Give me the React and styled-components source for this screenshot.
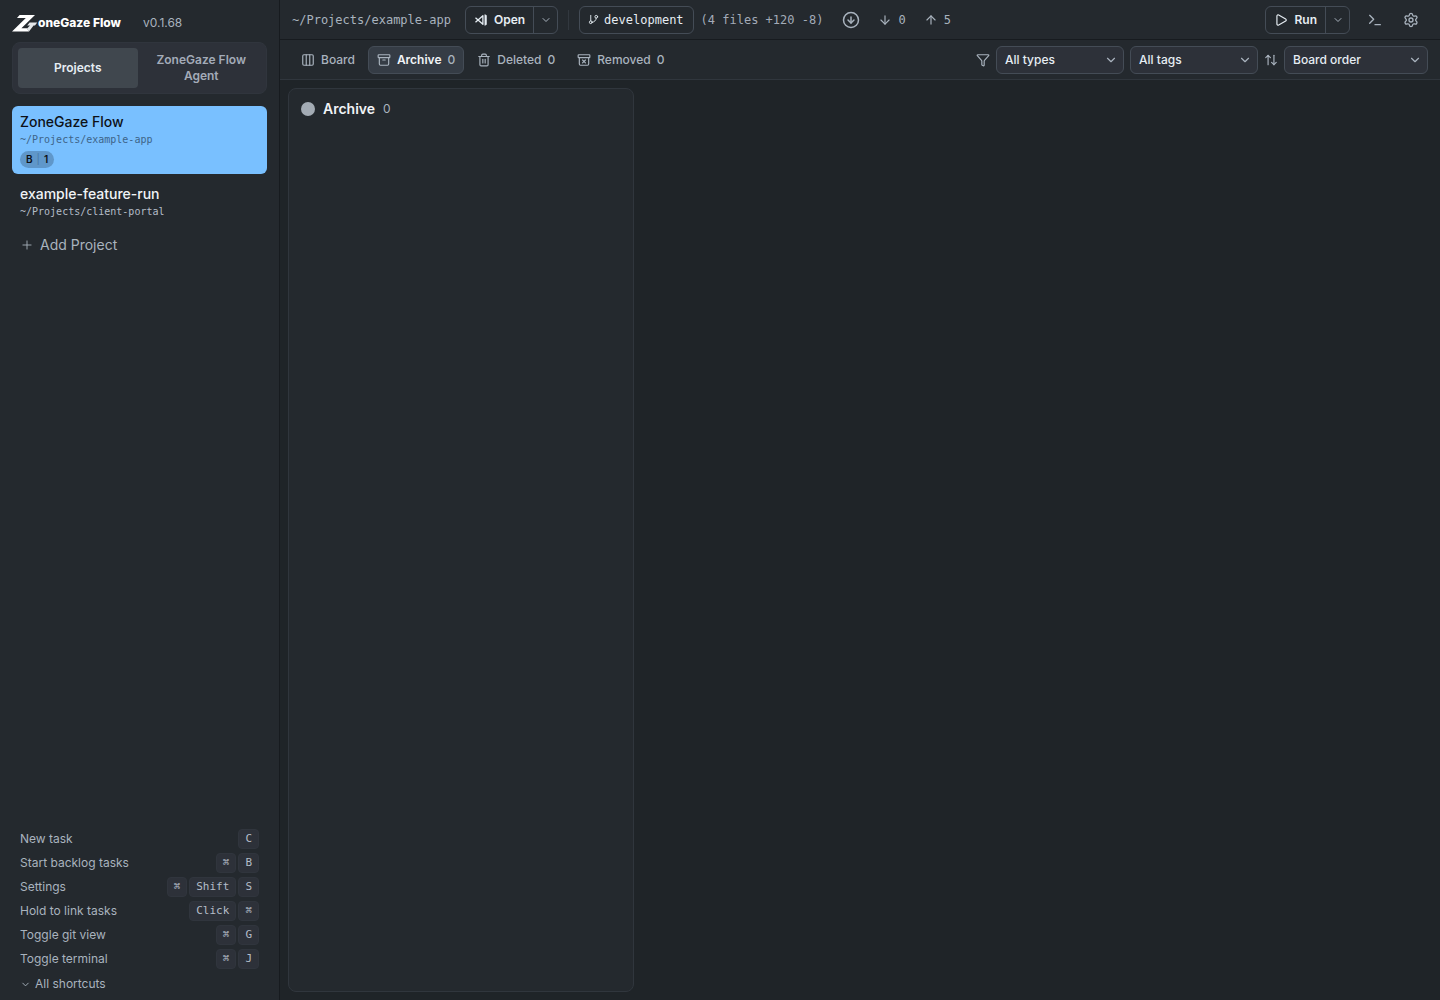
import React, { useState } from "react"
import styled, { createGlobalStyle } from "styled-components"
import {
  Archive,
  ArchiveX,
  ArrowDown,
  ArrowUp,
  ArrowUpDown,
  ChevronDown,
  CircleArrowDown,
  Columns3,
  Funnel,
  GitBranch,
  Play,
  Plus,
  Settings,
  Terminal,
  Trash2,
} from "lucide-react"

const sans = `Inter, "Liberation Sans", sans-serif`
const mono = `"DejaVu Sans Mono", "Liberation Mono", monospace`

const GlobalStyle = createGlobalStyle`
  * {
    box-sizing: border-box;
  }
  body {
    margin: 0;
    background: #1f2428;
    color: #e6edf3;
    font-family: ${sans};
    font-size: 12px;
    line-height: 16px;
    -webkit-font-smoothing: antialiased;
  }
  button, select {
    font: inherit;
    color: inherit;
    margin: 0;
    padding: 0;
    border: 0;
    background: none;
    cursor: pointer;
  }
  svg {
    display: block;
    flex-shrink: 0;
  }
`

const Layout = styled.div`
  display: flex;
  min-height: 100vh;
`

const Sidebar = styled.aside`
  display: flex;
  flex-direction: column;
  flex: 0 0 280px;
  padding: 0 12px 4px;
  background: #24292e;
  border-right: 1px solid #171b1f;
`

const Brand = styled.header`
  display: flex;
  align-items: center;
  height: 42px;
  padding-top: 4px;
`

const BrandName = styled.h1`
  margin: 0 22px 0 0;
  color: #ffffff;
  font-size: 12px;
  font-weight: 800;
`

const Version = styled.span`
  color: #a9b3be;
`

const Switcher = styled.div`
  display: grid;
  grid-template-columns: 1fr 1fr;
  gap: 4px;
  padding: 5px;
  background: #2d3139;
  border: 1px solid #30353d;
  border-radius: 8px;
`

const SwitcherButton = styled.button`
  min-height: 40px;
  padding: 4px 8px;
  border-radius: 4px;
  font-weight: 600;
  color: ${(p) => (p.$active ? "#e6edf3" : "#a3abb8")};
  background: ${(p) => (p.$active ? "#40474e" : "transparent")};
`

const Projects = styled.nav`
  display: flex;
  flex-direction: column;
  gap: 4px;
  margin-top: 12px;
`

const Project = styled.button`
  display: flex;
  flex-direction: column;
  align-items: flex-start;
  padding: 8px 8px 6px;
  border-radius: 6px;
  text-align: left;
  background: ${(p) => (p.$active ? "#79c0ff" : "transparent")};
  color: ${(p) => (p.$active ? "#0d1117" : "#f0f3f6")};
`

const ProjectName = styled.span`
  font-size: 14px;
  font-weight: 500;
`

const ProjectPath = styled.span`
  margin-top: 2px;
  font-family: ${mono};
  font-size: 10px;
  line-height: 15px;
  color: ${(p) => (p.$active ? "#3e6488" : "#b4bdc8")};
`

const Badge = styled.span`
  display: flex;
  gap: 4px;
  margin-top: 4px;
  padding: 0 6px;
  border-radius: 9px;
  background: #5f97ca;
  font-size: 10px;
  font-weight: 600;
  line-height: 17px;
`

const BadgeBar = styled.span`
  color: #4577a5;
  font-weight: 400;
`

const AddProject = styled.button`
  display: flex;
  align-items: center;
  gap: 6px;
  height: 32px;
  padding: 0 8px;
  font-size: 14px;
  color: #a9b3be;
`

const Shortcuts = styled.section`
  margin-top: auto;
  padding: 0 8px;
  color: #a9b3be;
`

const ShortcutRow = styled.div`
  display: flex;
  align-items: center;
  gap: 2px;
  height: 24px;
`

const ShortcutLabel = styled.span`
  flex: 1;
`

const Key = styled.kbd`
  height: 20px;
  padding: 0 6px;
  border: 1px solid #30353d;
  border-radius: 4px;
  background: #2d3139;
  color: #b4bdc8;
  font-family: ${mono};
  font-size: 11px;
  line-height: 18px;
`

const AllShortcuts = styled.button`
  display: flex;
  align-items: center;
  gap: 4px;
  height: 24px;
  margin-top: 1px;
`

const Main = styled.main`
  display: flex;
  flex-direction: column;
  flex: 1;
  min-width: 0;
`

const Bar = styled.div`
  display: flex;
  align-items: center;
  height: 40px;
  padding: 0 12px;
  background: #24292e;
  border-bottom: 1px solid ${(p) => p.$line};
`

const Path = styled.span`
  margin-right: 14px;
  font-family: ${mono};
  color: #a9b3be;
`

const SplitButton = styled.div`
  display: flex;
  height: 28px;
  border: 1px solid #444c56;
  border-radius: 6px;
`

const SplitMain = styled.button`
  display: flex;
  align-items: center;
  gap: 6px;
  padding: 0 8px;
  font-weight: 600;
`

const SplitToggle = styled.button`
  display: flex;
  align-items: center;
  justify-content: center;
  width: 24px;
  border-left: 1px solid #444c56;
  color: #a9b3be;
`

const Divider = styled.span`
  width: 1px;
  height: 20px;
  margin: 0 10px;
  background: #32383f;
`

const Branch = styled.button`
  display: flex;
  align-items: center;
  gap: 5px;
  height: 28px;
  margin-right: 7px;
  padding: 0 9px 0 8px;
  border: 1px solid #444c56;
  border-radius: 6px;
  font-family: ${mono};
`

const Changes = styled.span`
  margin-right: 19px;
  font-family: ${mono};
  color: #a3abb8;
`

const SyncButton = styled.button`
  display: flex;
  align-items: center;
  gap: 6px;
  margin-right: 18px;
  font-family: ${mono};
  color: #a9b3be;
`

const Tools = styled.div`
  display: flex;
  gap: 2px;
  margin-left: 8px;
`

const IconButton = styled.button`
  display: flex;
  padding: 6px 9px;
  color: #a9b3be;
`

const Spacer = styled.span`
  flex: 1;
`

const Tabs = styled.nav`
  display: flex;
  gap: 4px;
  flex: 1;
`

const Tab = styled.button`
  display: flex;
  align-items: center;
  gap: 6px;
  height: 28px;
  padding: 0 8px;
  border: 1px solid ${(p) => (p.$active ? "#444c56" : "transparent")};
  border-radius: 6px;
  background: ${(p) => (p.$active ? "#353c45" : "transparent")};
  color: #a9b3be;
  font-weight: 500;
`

const TabLabel = styled.span`
  color: ${(p) => (p.$active ? "#f0f3f6" : "inherit")};
  font-weight: ${(p) => (p.$active ? 600 : 500)};
`

const Filters = styled.div`
  display: flex;
  align-items: center;
  gap: 6px;
  color: #a9b3be;
`

const SelectBox = styled.div`
  display: grid;
  align-items: center;
  width: ${(p) => p.$width};

  > * {
    grid-area: 1 / 1;
  }
  svg {
    justify-self: end;
    margin-right: 6px;
    pointer-events: none;
  }
`

const Select = styled.select`
  appearance: none;
  width: 100%;
  height: 28px;
  padding: 0 24px 0 8px;
  border: 1px solid #444c56;
  border-radius: 6px;
  background: #2d3139;
  color: #e6edf3;
  font-weight: 500;
`

const Board = styled.div`
  display: flex;
  flex: 1;
  gap: 8px;
  padding: 8px;
`

const Column = styled.section`
  flex: 0 0 346px;
  border: 1px solid #30363d;
  border-radius: 8px;
  background: #24292e;
`

const ColumnHeader = styled.header`
  display: flex;
  align-items: center;
  gap: 8px;
  height: 40px;
  padding: 0 12px;
`

const Dot = styled.span`
  width: 14px;
  height: 14px;
  border-radius: 50%;
  background: #a3abb4;
`

const ColumnTitle = styled.h2`
  margin: 0;
  font-size: 14px;
  font-weight: 600;
  color: #f0f3f6;
`

const ColumnCount = styled.span`
  color: #a9b3be;
`

const Logo = () => (
  <svg width="26" height="18" viewBox="0 0 26 18" fill="#ffffff" aria-hidden="true">
    <path d="M7.6 1H23L9.4 14.200H14.800L17 17.500H0L13.800 4H5z" />
    <path d="M17.600 8.500H25.200L23 11.600H21.600L17 17.500L14.800 14.700L18 11.600H15.200z" fill="#e4e7ea" />
  </svg>
)

const VsCodeIcon = () => (
  <svg width="14" height="14" viewBox="0 0 14 14" fill="none" stroke="currentColor" strokeLinejoin="round" aria-hidden="true">
    <path d="M1.500 4.700 8.900 11.300V2.700L1.500 9.300" strokeWidth="1.300" />
    <path d="M10.800 1.600 12.500 2.500V11.500L10.800 12.400z" fill="currentColor" strokeWidth="0.500" />
  </svg>
)

const shortcuts = [
  { label: "New task", keys: ["C"] },
  { label: "Start backlog tasks", keys: ["⌘", "B"] },
  { label: "Settings", keys: ["⌘", "Shift", "S"] },
  { label: "Hold to link tasks", keys: ["Click", "⌘"] },
  { label: "Toggle git view", keys: ["⌘", "G"] },
  { label: "Toggle terminal", keys: ["⌘", "J"] },
]

const projects = [
  { name: "ZoneGaze Flow", path: "~/Projects/example-app", backlog: 1 },
  { name: "example-feature-run", path: "~/Projects/client-portal" },
]

const tabs = [
  { label: "Board", icon: Columns3 },
  { label: "Archive", icon: Archive, count: 0 },
  { label: "Deleted", icon: Trash2, count: 0 },
  { label: "Removed", icon: ArchiveX, count: 0 },
]

const Dropdown = ({ label, width, children }) => (
  <SelectBox $width={width}>
    <Select aria-label={label}>{children}</Select>
    <ChevronDown size={14} />
  </SelectBox>
)

export default function App() {
  const [view, setView] = useState("Projects")
  const [project, setProject] = useState(projects[0].name)
  const [tab, setTab] = useState("Archive")

  return (
    <Layout>
      <GlobalStyle />
      <Sidebar>
        <Brand>
          <Logo />
          <BrandName>oneGaze Flow</BrandName>
          <Version>v0.1.68</Version>
        </Brand>
        <Switcher>
          {["Projects", "ZoneGaze Flow Agent"].map((name) => (
            <SwitcherButton key={name} $active={view === name} onClick={() => setView(name)}>
              {name}
            </SwitcherButton>
          ))}
        </Switcher>
        <Projects>
          {projects.map((item) => (
            <Project key={item.name} $active={project === item.name} onClick={() => setProject(item.name)}>
              <ProjectName>{item.name}</ProjectName>
              <ProjectPath $active={project === item.name}>{item.path}</ProjectPath>
              {item.backlog && (
                <Badge>
                  <span>B</span>
                  <BadgeBar>|</BadgeBar>
                  <span>{item.backlog}</span>
                </Badge>
              )}
            </Project>
          ))}
          <AddProject>
            <Plus size={14} strokeWidth={1.5} />
            Add Project
          </AddProject>
        </Projects>
        <Shortcuts>
          {shortcuts.map((item) => (
            <ShortcutRow key={item.label}>
              <ShortcutLabel>{item.label}</ShortcutLabel>
              {item.keys.map((key) => (
                <Key key={key}>{key}</Key>
              ))}
            </ShortcutRow>
          ))}
          <AllShortcuts>
            <ChevronDown size={11} />
            All shortcuts
          </AllShortcuts>
        </Shortcuts>
      </Sidebar>

      <Main>
        <Bar $line="#171b1f">
          <Path>~/Projects/example-app</Path>
          <SplitButton>
            <SplitMain>
              <VsCodeIcon />
              Open
            </SplitMain>
            <SplitToggle aria-label="Choose editor">
              <ChevronDown size={12} />
            </SplitToggle>
          </SplitButton>
          <Divider />
          <Branch>
            <GitBranch size={11} />
            development
          </Branch>
          <Changes>(4 files +120 -8)</Changes>
          <SyncButton aria-label="Fetch">
            <CircleArrowDown size={18} />
          </SyncButton>
          <SyncButton>
            <ArrowDown size={14} />0
          </SyncButton>
          <SyncButton>
            <ArrowUp size={14} />5
          </SyncButton>
          <Spacer />
          <SplitButton>
            <SplitMain>
              <Play size={14} />
              Run
            </SplitMain>
            <SplitToggle aria-label="Choose command">
              <ChevronDown size={12} />
            </SplitToggle>
          </SplitButton>
          <Tools>
            <IconButton aria-label="Terminal">
              <Terminal size={16} />
            </IconButton>
            <IconButton aria-label="Settings">
              <Settings size={16} />
            </IconButton>
          </Tools>
        </Bar>

        <Bar $line="#30363d">
          <Tabs>
            {tabs.map(({ label, icon: Icon, count }) => (
              <Tab key={label} $active={tab === label} onClick={() => setTab(label)}>
                <Icon size={14} />
                <TabLabel $active={tab === label}>{label}</TabLabel>
                {count !== undefined && <span>{count}</span>}
              </Tab>
            ))}
          </Tabs>
          <Filters>
            <Funnel size={14} />
            <Dropdown label="Type" width="128px">
              <option>All types</option>
            </Dropdown>
            <Dropdown label="Tag" width="128px">
              <option>All tags</option>
            </Dropdown>
            <ArrowUpDown size={14} />
            <Dropdown label="Sort" width="144px">
              <option>Board order</option>
            </Dropdown>
          </Filters>
        </Bar>

        <Board>
          <Column>
            <ColumnHeader>
              <Dot />
              <ColumnTitle>Archive</ColumnTitle>
              <ColumnCount>0</ColumnCount>
            </ColumnHeader>
          </Column>
        </Board>
      </Main>
    </Layout>
  )
}
